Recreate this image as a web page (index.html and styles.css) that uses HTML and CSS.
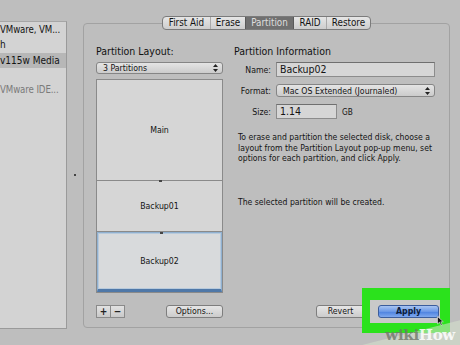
FILE: index.html
```html
<!DOCTYPE html>
<html lang="en">
<head>
    <meta charset="UTF-8">
    <meta name="viewport" content="width=device-width, initial-scale=1.0">
    <title>Disk Utility - Partition</title>
    <link rel="stylesheet" href="styles.css">
</head>
<body>
    <div class="window">
        <aside class="sidebar">
            <div class="item cut">VMware, VM...</div>
            <div class="item">h</div>
            <div class="item selected">v115w Media</div>
            <div class="item"></div>
            <div class="item cut dim">VMware IDE...</div>
        </aside>

        <div class="splitter"><span class="grip"></span></div>

        <section class="panel">
            <nav class="tabs">
                <span class="tab t-first">First Aid</span>
                <span class="tab t-erase">Erase</span>
                <span class="tab t-part active">Partition</span>
                <span class="tab t-raid">RAID</span>
                <span class="tab t-restore">Restore</span>
            </nav>

            <div class="panel-body">
                <div class="col layout-col">
                    <h3 class="col-title">Partition Layout:</h3>
                    <div class="popup">
                        <span>3 Partitions</span>
                        <svg class="arrows" width="5" height="8" viewBox="0 0 5 8"><path d="M0 3 L2.5 0 L5 3 Z M0 5 L2.5 8 L5 5 Z" fill="#222"/></svg>
                    </div>
                    <div class="map">
                        <div class="slice main">Main</div>
                        <div class="slice b1">Backup01</div>
                        <div class="slice b2 current">Backup02</div>
                    </div>
                    <div class="btn-row">
                        <div class="seg">
                            <span class="seg-btn">+</span>
                            <span class="seg-btn">&minus;</span>
                        </div>
                        <span class="btn options">Options...</span>
                    </div>
                </div>

                <div class="col info-col">
                    <h3 class="col-title">Partition Information</h3>
                    <div class="form">
                        <label class="f-label">Name:</label>
                        <div class="field name">Backup02</div>

                        <label class="f-label">Format:</label>
                        <div class="popup format">
                            <span>Mac OS Extended (Journaled)</span>
                            <svg class="arrows" width="5" height="8" viewBox="0 0 5 8"><path d="M0 3 L2.5 0 L5 3 Z M0 5 L2.5 8 L5 5 Z" fill="#222"/></svg>
                        </div>

                        <label class="f-label">Size:</label>
                        <div class="size-row">
                            <div class="field size">1.14</div>
                            <span class="unit">GB</span>
                        </div>
                    </div>
                    <p class="help">To erase and partition the selected disk, choose a layout from the Partition Layout pop-up menu, set options for each partition, and click Apply.</p>
                    <p class="status">The selected partition will be created.</p>
                    <div class="btn-row end">
                        <span class="btn revert">Revert</span>
                        <span class="btn apply">Apply</span>
                    </div>
                </div>
            </div>
        </section>
    </div>

    <div class="highlight"></div>

    <div class="watermark">
        <div class="wedge"></div>
        <span class="wm-text"><span class="wm-wiki">wiki</span><span class="wm-how">How</span></span>
    </div>

    <svg class="cursor" width="7" height="10" viewBox="0 0 7 10"><path d="M0.5 0.5 L0.5 8 L2.5 6.2 L4 9.3 L5.2 8.7 L3.8 5.8 L6.3 5.8 Z" fill="#111" stroke="#eee" stroke-width="0.6"/></svg>
</body>
</html>
```

FILE: styles.css
```css
body {
    margin: 0;
    width: 460px;
    height: 345px;
    overflow: hidden;
    background: #bebebe;
    font-family: "DejaVu Sans Condensed", "DejaVu Sans", sans-serif;
    color: #141414;
    position: relative;
}

.window {
    display: flex;
    align-items: flex-start;
    height: 345px;
}

/* source list */
.sidebar {
    width: 66px;
    height: 306px;
    margin-top: 21px;
    background: #d3d3d3;
    border-top: 1px solid #a6a6a6;
    border-right: 1px solid #9a9a9a;
    border-bottom: 1px solid #9a9a9a;
    overflow: hidden;
    flex: none;
}

.item {
    height: 15px;
    line-height: 15px;
    font-size: 10px;
    white-space: nowrap;
}

.item.cut {
    font-size: 9.6px;
    letter-spacing: -0.1px;
}

.item.selected {
    background: #b7b7b7;
    margin-top: 1px;
}

.item.dim {
    color: #7a7a7a;
    margin-top: -1px;
}

.splitter {
    width: 16px;
    height: 345px;
    flex: none;
    display: flex;
    align-items: center;
    justify-content: center;
}

.grip {
    width: 2px;
    height: 2px;
    background: #444;
    margin-top: 4px;
}

/* main tab panel */
.panel {
    width: 365px;
    height: 303px;
    margin-top: 23px;
    border: 1px solid #a2a2a2;
    border-radius: 4px;
    display: flex;
    flex-direction: column;
    flex: none;
}

.tabs {
    align-self: center;
    display: flex;
    height: 12px;
    margin-top: -8px;
    border: 1px solid #7b7b7b;
    border-radius: 4px;
    background: linear-gradient(#e6e6e6, #cdcdcd);
    overflow: hidden;
    font-size: 9.8px;
    line-height: 12px;
}

.tab {
    text-align: center;
    border-left: 1px solid #a9a9a9;
    box-sizing: border-box;
}

.tab:first-child {
    border-left: none;
}

.t-first { width: 47px; }
.t-erase { width: 35px; }
.t-part { width: 48px; }
.t-raid { width: 33px; }
.t-restore { width: 44px; }

.tab.active {
    background: #707070;
    color: #dedede;
    border-left-color: #5a5a5a;
}

.tab.active + .tab {
    border-left-color: #5a5a5a;
}

.panel-body {
    flex: 1;
    display: flex;
    gap: 11px;
    padding: 15px 0 9px 12px;
}

.col {
    display: flex;
    flex-direction: column;
}

.layout-col {
    width: 127px;
}

.info-col {
    width: 203px;
}

.col-title {
    margin: 0;
    height: 12px;
    line-height: 12px;
    font-size: 10.5px;
    font-weight: normal;
    color: #111;
}

/* pop-up menus */
.popup {
    height: 10px;
    margin-top: 5px;
    padding: 0 4px 0 6px;
    border: 1px solid #858585;
    border-radius: 3px;
    background: linear-gradient(#e4e4e4, #cbcbcb);
    display: flex;
    align-items: center;
    justify-content: space-between;
    font-size: 8.7px;
    line-height: 10px;
}

.arrows {
    flex: none;
}

/* partition map */
.map {
    margin-top: 5px;
    height: 214px;
    display: flex;
    flex-direction: column;
    gap: 1px;
    background: #8a8a8a;
    border: 1px solid #8a8a8a;
    box-sizing: border-box;
}

.slice {
    background: #d6d6d6;
    display: flex;
    align-items: center;
    justify-content: center;
    font-size: 8.7px;
    position: relative;
}

.slice.main { height: 100px; }
.slice.b1 { height: 50px; }

.slice.b1::before,
.slice.b2::before {
    content: "";
    position: absolute;
    top: -1px;
    left: 62px;
    width: 3px;
    height: 2px;
    background: #444;
}

.slice.b2 {
    flex: 1;
    background: #d8dadc;
    border: 1px solid #8fb0d0;
    border-bottom: 3px solid #4f78a8;
    box-shadow: inset 0 0 0 1px #b8cadc;
}

/* buttons */
.btn-row {
    margin-top: auto;
    display: flex;
    justify-content: space-between;
    align-items: center;
    height: 13px;
}

.btn-row.end {
    justify-content: flex-end;
    gap: 13px;
}

.seg {
    display: flex;
    height: 13px;
}

.seg-btn {
    width: 13px;
    height: 11px;
    border: 1px solid #8a8a8a;
    background: linear-gradient(#e2e2e2, #c9c9c9);
    font-size: 10px;
    font-weight: bold;
    line-height: 11px;
    text-align: center;
    color: #222;
}

.seg-btn + .seg-btn {
    border-left: none;
}

.btn {
    height: 11px;
    border: 1px solid #7e7e7e;
    border-radius: 3px;
    background: linear-gradient(#e6e6e6, #cbcbcb);
    font-size: 8.7px;
    line-height: 11px;
    text-align: center;
    box-sizing: content-box;
}

.options { width: 55px; }
.revert { width: 47px; }

.apply {
    width: 59px;
    margin-right: -2px;
    background: linear-gradient(#a9c5f2, #6b98e6 50%, #4f83e0 55%, #7fa8ee);
    border-color: #3b5d9c;
    color: #0d1c3a;
    font-weight: bold;
    position: relative;
    z-index: 2;
}

/* info form */
.form {
    margin-top: 5px;
    display: grid;
    grid-template-columns: 37px 159px;
    column-gap: 5px;
    row-gap: 7px;
    align-items: center;
}

.f-label {
    text-align: right;
    font-size: 8.7px;
}

.field {
    height: 13px;
    border: 1px solid #8c8c8c;
    border-top-color: #6f6f6f;
    background: #d6d6d6;
    font-size: 10.5px;
    line-height: 13px;
    padding-left: 3px;
}

.popup.format {
    margin-top: 0;
    height: 11px;
}

.size-row {
    display: flex;
    align-items: center;
    gap: 5px;
}

.field.size {
    width: 56px;
}

.unit {
    font-size: 8.2px;
}

.help {
    margin: 13px 0 0 4px;
    font-size: 8.6px;
    line-height: 10.5px;
}

.status {
    margin: 33px 0 0 4px;
    font-size: 8.6px;
    line-height: 10.5px;
}

/* tutorial overlays */
.highlight {
    position: absolute;
    left: 362px;
    top: 288px;
    width: 70px;
    height: 23px;
    border-style: solid;
    border-color: #2be21c;
    border-width: 12px 10px 10px 8px;
    background: rgba(255, 255, 255, 0.18);
    z-index: 1;
}

.watermark {
    position: absolute;
    right: 0;
    bottom: 0;
    width: 98px;
    height: 28px;
    z-index: 3;
}

.wedge {
    position: absolute;
    inset: 0;
    background: rgba(214, 226, 204, 0.55);
    clip-path: polygon(0 100%, 100% 12%, 100% 100%);
}

.wm-text {
    position: absolute;
    right: 5px;
    bottom: 1px;
    font-family: "DejaVu Serif", "Liberation Serif", serif;
    font-weight: bold;
    font-size: 15px;
    letter-spacing: -0.3px;
}

.wm-wiki {
    color: rgba(110, 118, 104, 0.8);
}

.wm-how {
    color: rgba(255, 255, 255, 0.85);
}

.cursor {
    position: absolute;
    left: 437px;
    top: 316px;
    z-index: 4;
}
```
